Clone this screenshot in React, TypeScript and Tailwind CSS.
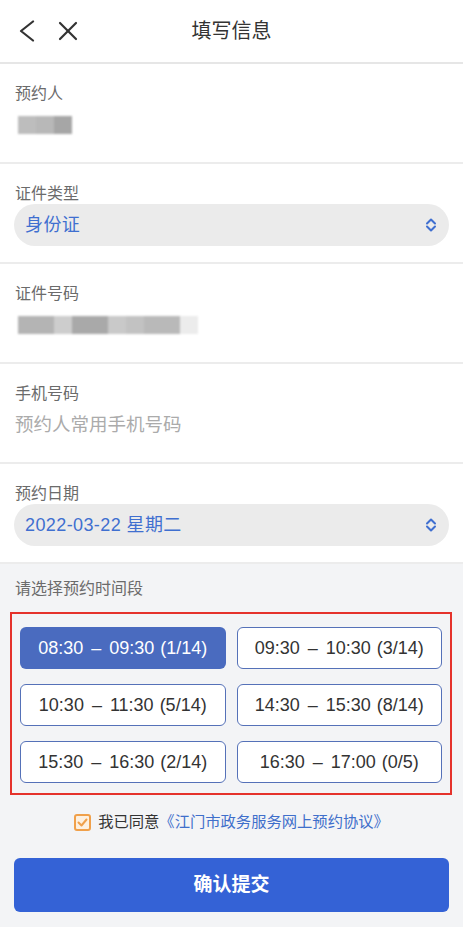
import React from "react";

const CJK = '"Liberation Sans", "Noto Sans CJK SC", sans-serif';

function UpDown() {
  return (
    <svg width="12" height="16" viewBox="0 0 12 16" fill="none" stroke="#3f6fd0" strokeWidth="2" strokeLinecap="round" strokeLinejoin="round">
      <path d="M2 6.5 L6 2.5 L10 6.5" />
      <path d="M2 9.5 L6 13.5 L10 9.5" />
    </svg>
  );
}

function Section({ label, children }: { label: string; children: React.ReactNode }) {
  return (
    <div className="bg-white pt-[19px] pb-[16px] border-b-2 border-[#ececec]">
      <div className="px-[15px] h-[21px] flex items-center text-[16px] text-[#6b6b6b]">{label}</div>
      <div className="h-[42px] flex items-center">{children}</div>
    </div>
  );
}

function Pill({ text }: { text: string }) {
  return (
    <div className="mx-[14px] w-full h-[42px] rounded-full bg-[#ebebeb] flex items-center justify-between pl-[11px] pr-[12px]">
      <span className="text-[18px] text-[#3f6fd0] tracking-[0.4px]">{text}</span>
      <UpDown />
    </div>
  );
}

const slots: [string, string, string][] = [
  ["08:30", "09:30", "(1/14)"],
  ["09:30", "10:30", "(3/14)"],
  ["10:30", "11:30", "(5/14)"],
  ["14:30", "15:30", "(8/14)"],
  ["15:30", "16:30", "(2/14)"],
  ["16:30", "17:00", "(0/5)"],
];

export default function App() {
  return (
    <div className="w-[463px] h-[927px] bg-[#f3f4f6] overflow-hidden" style={{ fontFamily: CJK }}>
      {/* header */}
      <div className="h-[64px] bg-white border-b-2 border-[#e6e6e6] flex items-center relative">
        <div className="flex items-center gap-[22px] pl-[18px]">
          <svg width="18" height="22" viewBox="0 0 18 22" fill="none" stroke="#333" strokeWidth="2.2" strokeLinecap="round" strokeLinejoin="round">
            <path d="M15 1.5 L3 11 L15 20.5" />
          </svg>
          <svg width="20" height="20" viewBox="0 0 20 20" fill="none" stroke="#333" strokeWidth="2.2" strokeLinecap="round">
            <path d="M2 2 L18 18" />
            <path d="M18 2 L2 18" />
          </svg>
        </div>
        <div className="absolute left-0 right-0 text-center text-[20px] text-[#333] pointer-events-none">填写信息</div>
      </div>

      <Section label="预约人">
        <div className="flex items-center ml-[18px] blur-[1px]">
          <div className="h-[18px] w-[18px] bg-[#bdbdbd]" />
          <div className="h-[18px] w-[18px] bg-[#b8b8b8]" />
          <div className="h-[18px] w-[18px] bg-[#a6a6a6]" />
        </div>
      </Section>

      <Section label="证件类型">
        <Pill text="身份证" />
      </Section>

      <Section label="证件号码">
        <div className="flex items-center ml-[18px] blur-[1px]">
          <div className="h-[18px] w-[36px] bg-[#b4b4b4]" />
          <div className="h-[18px] w-[18px] bg-[#cdcdcd]" />
          <div className="h-[18px] w-[36px] bg-[#a9a9a9]" />
          <div className="h-[18px] w-[18px] bg-[#c9c9c9]" />
          <div className="h-[18px] w-[18px] bg-[#c2c2c2]" />
          <div className="h-[18px] w-[36px] bg-[#b9b9b9]" />
          <div className="h-[18px] w-[18px] bg-[#ececec]" />
        </div>
      </Section>

      <Section label="手机号码">
        <span className="px-[15px] text-[18.5px] text-[#ababab]">预约人常用手机号码</span>
      </Section>

      <Section label="预约日期">
        <Pill text="2022-03-22 星期二" />
      </Section>

      {/* time slots */}
      <div className="pt-[14px]">
        <div className="px-[15px] h-[21px] flex items-center text-[16px] text-[#6b6b6b]">请选择预约时间段</div>
        <div className="mt-[13px] ml-[10px] mr-[11px] border-2 border-[#e5322b] pt-[13px] pb-[10px] px-[8px] grid grid-cols-2 gap-x-[11px] gap-y-[15px]">
          {slots.map(([a, b, c], i) => (
            <div
              key={a}
              className={
                i === 0
                  ? "h-[42px] rounded-[6px] bg-[#4a6bbf] text-white flex items-center justify-center text-[18px]"
                  : "h-[42px] rounded-[6px] bg-white border border-[#5571b8] text-[#333] flex items-center justify-center text-[18px]"
              }
            >
              <span>{a}</span>
              <span className="mx-[8px]">–</span>
              <span>{b}</span>
              <span className="ml-[6px]">{c}</span>
            </div>
          ))}
        </div>

        <div className="mt-[16px] flex items-center justify-center text-[15.3px]">
          <svg width="17" height="17" viewBox="0 0 17 17" className="mr-[7px]">
            <rect x="1" y="1" width="15" height="15" rx="2" fill="#fdf0e0" stroke="#f0a04a" strokeWidth="2" />
            <path d="M4.5 8.5 L7.5 11.5 L12.5 5.5" fill="none" stroke="#f0a04a" strokeWidth="2" strokeLinecap="round" strokeLinejoin="round" />
          </svg>
          <span className="text-[#333]">我已同意</span>
          <span className="text-[#3f6fcb]">《江门市政务服务网上预约协议》</span>
        </div>

        <div className="mt-[24px] mx-[14px] h-[54px] rounded-[6px] bg-[#3462d6] flex items-center justify-center text-white text-[19px] font-bold">
          确认提交
        </div>
      </div>
    </div>
  );
}
